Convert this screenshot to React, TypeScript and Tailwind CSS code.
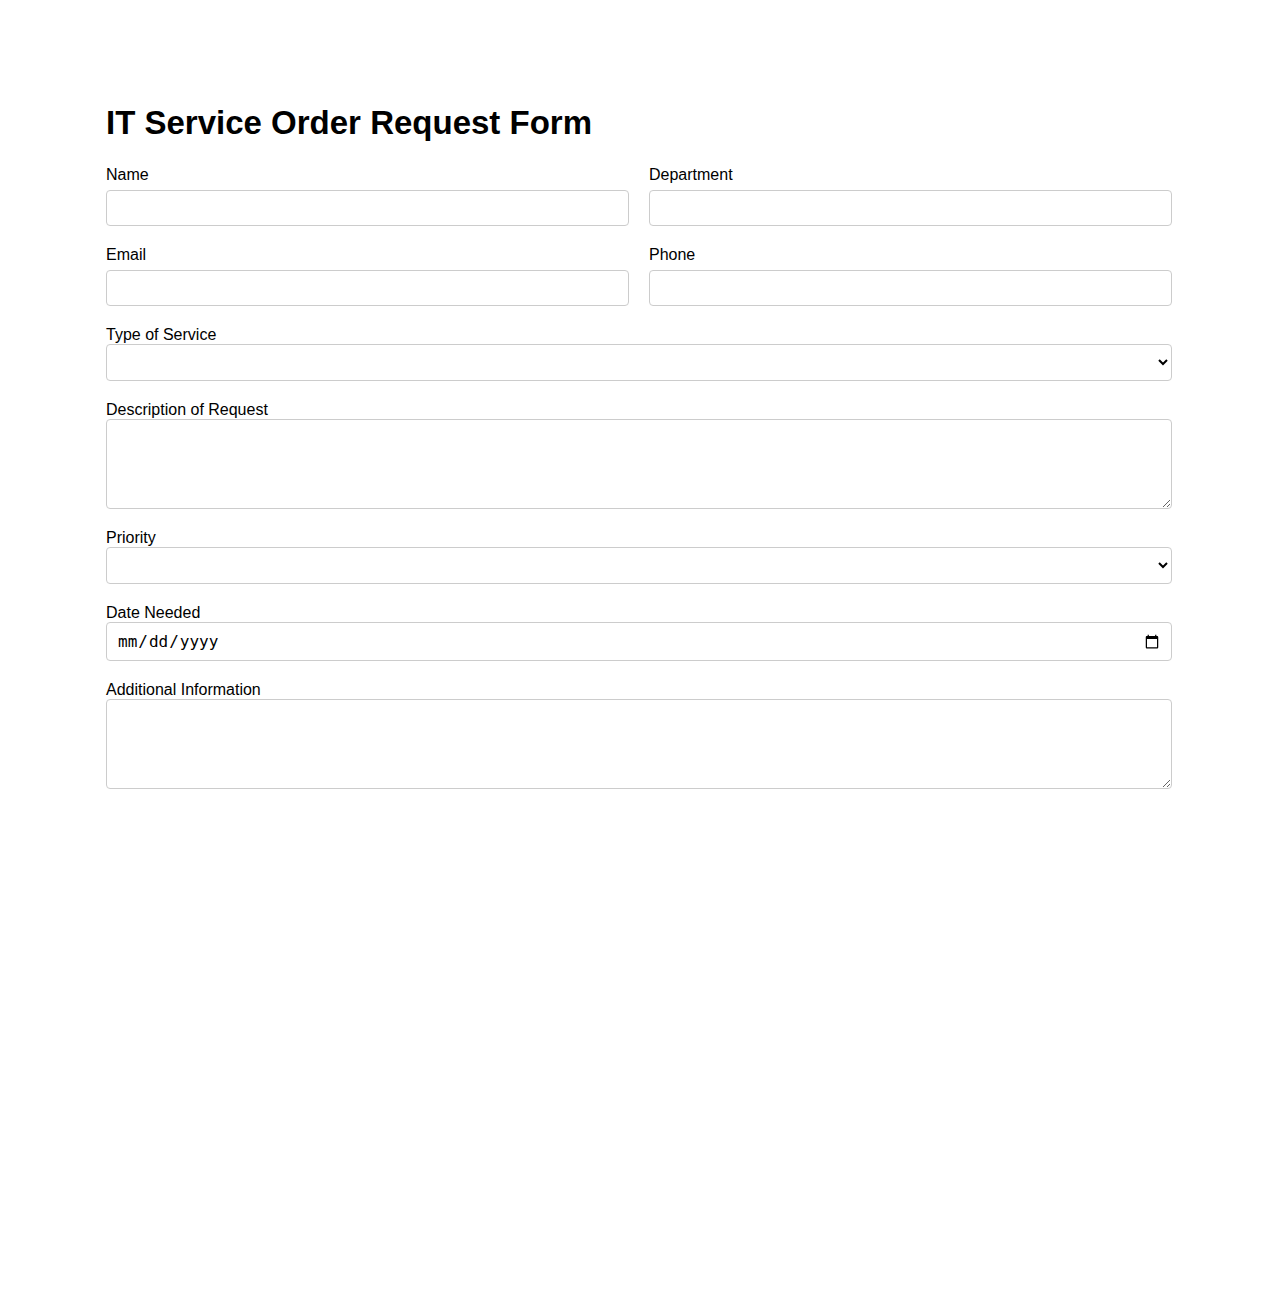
import React from 'react';

const field =
  'block w-full border border-[#cccccc] rounded-[4px] bg-white px-2 text-[16px] text-black outline-none';

const Label: React.FC<{ text: string; gap?: boolean }> = ({ text, gap }) => (
  <label className={`block text-[16px] leading-[18px] text-black ${gap ? 'mb-[6px]' : ''}`}>{text}</label>
);

export default function App() {
  return (
    <div className="min-h-[1300px] bg-white font-['Liberation_Sans',Arial,sans-serif] text-black">
      <form className="mx-auto w-full max-w-[1066px] pt-[105px]">
        <h1 className="text-[33px] font-bold leading-[36px] mb-[25px]">IT Service Order Request Form</h1>

        <div className="grid grid-cols-2 gap-x-5 gap-y-5">
          <div>
            <Label text="Name" gap />
            <input type="text" className={`${field} h-9`} />
          </div>
          <div>
            <Label text="Department" gap />
            <input type="text" className={`${field} h-9`} />
          </div>
          <div>
            <Label text="Email" gap />
            <input type="email" className={`${field} h-9`} />
          </div>
          <div>
            <Label text="Phone" gap />
            <input type="tel" className={`${field} h-9`} />
          </div>
        </div>

        <div className="mt-5 flex flex-col gap-5">
          <div>
            <Label text="Type of Service" />
            <select className={`${field} h-[37px]`} defaultValue="">
              <option value=""></option>
              <option>Hardware Repair</option>
              <option>Software Installation</option>
              <option>Network Support</option>
              <option>Account Access</option>
            </select>
          </div>
          <div>
            <Label text="Description of Request" />
            <textarea className={`${field} h-[90px] py-2`} />
          </div>
          <div>
            <Label text="Priority" />
            <select className={`${field} h-[37px]`} defaultValue="">
              <option value=""></option>
              <option>Low</option>
              <option>Medium</option>
              <option>High</option>
            </select>
          </div>
          <div>
            <Label text="Date Needed" />
            <input
              type="date"
              className={`${field} h-[39px] pl-[10px] pr-[9px] font-['DejaVu_Sans_Mono',monospace] text-[12px]`}
            />
          </div>
          <div>
            <Label text="Additional Information" />
            <textarea className={`${field} h-[90px] py-2`} />
          </div>
        </div>
      </form>
    </div>
  );
}
